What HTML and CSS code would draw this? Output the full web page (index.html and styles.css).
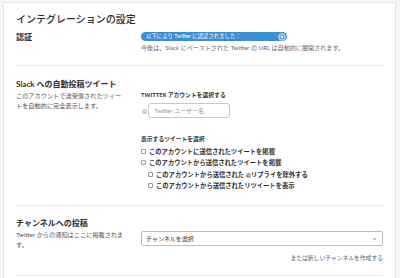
FILE: index.html
```html
<!DOCTYPE html>
<html lang="ja">
<head>
<meta charset="utf-8">
<link rel="stylesheet" href="styles.css">
</head>
<body>
<div class="card">
  <h1 class="title">インテグレーションの設定</h1>

  <section class="row auth">
    <div class="left"><h2 class="head">認証</h2></div>
    <div class="right">
      <div class="badge">
        <span>以下により Twitter に認証されました：</span>
        <svg class="badge-icon" width="8" height="8" viewBox="0 0 8 8"><circle cx="4" cy="4" r="3.2" fill="none" stroke="#fff" stroke-width="0.9"/><circle cx="4" cy="4" r="1.4" fill="#fff"/></svg>
      </div>
      <p class="note">今後は、Slack にペーストされた Twitter の URL は自動的に展開されます。</p>
    </div>
  </section>

  <section class="row tweets">
    <div class="left">
      <h2 class="head">Slack への自動投稿ツイート</h2>
      <p class="desc">このアカウントで送受信されたツイー<br>トを自動的に完全表示します。</p>
    </div>
    <div class="right pushed">
      <div class="label">TWITTER アカウントを選択する</div>
      <div class="input-row">
        <span class="at">@</span>
        <div class="input">Twitter ユーザー名</div>
      </div>
      <div class="label second">表示するツイートを選択</div>
      <ul class="checks">
        <li><span class="box"></span>このアカウントに送信されたツイートを掲載</li>
        <li><span class="box"></span>このアカウントから送信されたツイートを掲載</li>
        <li class="sub"><span class="box"></span>このアカウントから送信された @リプライを除外する</li>
        <li class="sub"><span class="box"></span>このアカウントから送信されたリツイートを表示</li>
      </ul>
    </div>
  </section>

  <section class="row channel">
    <div class="left">
      <h2 class="head">チャンネルへの投稿</h2>
      <p class="desc">Twitter からの通知はここに掲載されま<br>す。</p>
    </div>
    <div class="right pushed2">
      <div class="select"><span>チャンネルを選択</span><svg width="5" height="4" viewBox="0 0 5 4"><path d="M1 1.2 L2.5 2.7 L4 1.2" fill="none" stroke="#555" stroke-width="0.8"/></svg></div>
      <div class="link">または新しいチャンネルを作成する</div>
    </div>
  </section>
</div>
</body>
</html>
```
FILE: styles.css
```css
* { box-sizing: border-box; }
html, body { margin: 0; padding: 0; }
body {
  background: #f6f6f6;
  font-family: Lato, "Noto Sans CJK JP", sans-serif;
  color: #2c2d30;
  height: 278px;
  overflow: hidden;
}
.card {
  margin: 2px 4px 0 3px;
  background: #fff;
  border: 1px solid #e3e3e3;
  border-bottom: none;
  padding: 10px 12px 0 12px;
  height: 276px;
  overflow: hidden;
}
.title {
  margin: 0;
  font-size: 10px;
  line-height: 12px;
  font-weight: 500;
}
.row {
  display: grid;
  grid-template-columns: 125px 1fr;
  border-bottom: 1px solid #e8e8e8;
}
.head {
  margin: 0;
  font-size: 8px;
  line-height: 10px;
  font-weight: 700;
}
.desc {
  margin: 2px 0 0;
  font-size: 6.2px;
  line-height: 9.5px;
  color: #555;
  white-space: nowrap;
}
.auth { padding: 7px 0 13px; }
.badge {
  display: flex;
  align-items: center;
  justify-content: space-between;
  width: 146px;
  height: 9px;
  border-radius: 5px;
  background: #3a8fd2;
  color: #fff;
  font-size: 5.4px;
  line-height: 9px;
  padding: 0 1px 0 5px;
}
.badge-icon { display: block; }
.note {
  margin: 3px 0 0;
  font-size: 6.1px;
  line-height: 8px;
  color: #666;
  white-space: nowrap;
}
.tweets { padding: 13px 0 14px; }
.pushed { padding-top: 12px; }
.label {
  font-size: 5.8px;
  line-height: 8px;
  font-weight: 700;
  color: #333;
  white-space: nowrap;
}
.label.second { margin-top: 17px; }
.input-row {
  display: flex;
  align-items: center;
  gap: 2px;
  margin-top: 4px;
}
.at {
  font-size: 6px;
  color: #777;
  width: 5px;
  padding-left: 1px;
}
.input {
  width: 82px;
  height: 15px;
  border: 1px solid #c8c8c8;
  border-radius: 3px;
  font-size: 6px;
  line-height: 13px;
  color: #999;
  padding-left: 5px;
}
.checks {
  list-style: none;
  margin: 3px 0 0;
  padding: 0;
}
.checks li {
  display: flex;
  align-items: center;
  gap: 3px;
  font-size: 6.3px;
  line-height: 11.3px;
  font-weight: 600;
  white-space: nowrap;
}
.checks li.sub { padding-left: 7px; }
.box {
  width: 5px;
  height: 5px;
  border: 0.7px solid #999;
  border-radius: 1px;
  background: #fff;
  flex: none;
}
.channel { padding: 12px 0 13px; }
.pushed2 { padding-top: 13px; }
.select {
  display: flex;
  align-items: center;
  justify-content: space-between;
  height: 15px;
  border: 1px solid #bdbdbd;
  border-radius: 2px;
  padding: 0 5px 0 4px;
  font-size: 6px;
  color: #333;
}
.select svg { display: block; }
.link {
  margin-top: 8px;
  text-align: right;
  font-size: 5.8px;
  line-height: 8px;
  color: #4d6582;
  white-space: nowrap;
}
```
